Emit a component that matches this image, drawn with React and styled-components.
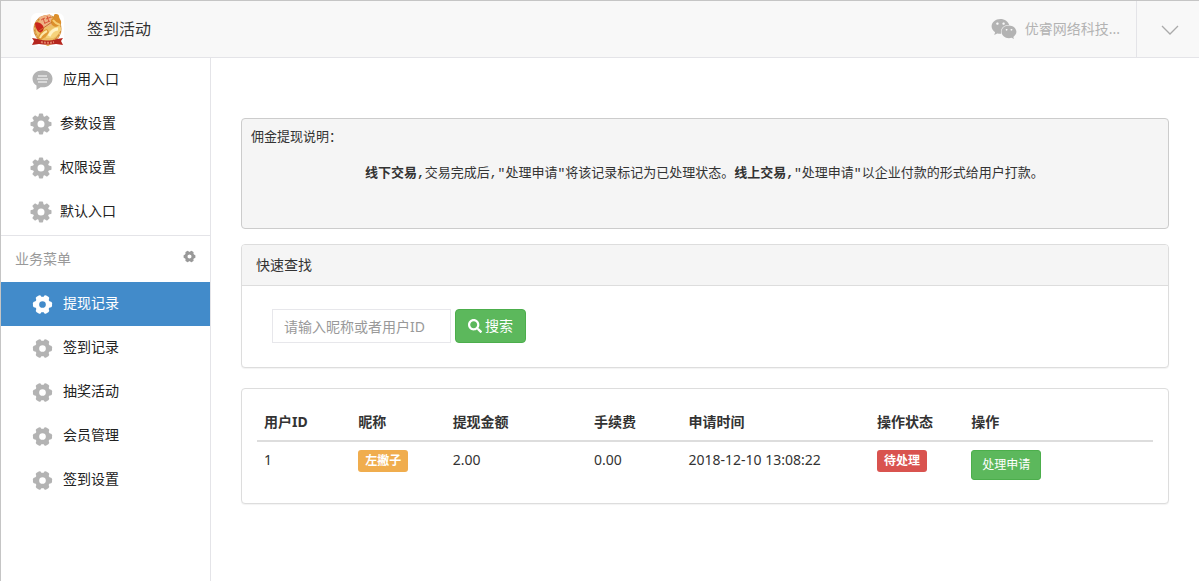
import React from "react";
import styled, { createGlobalStyle } from "styled-components";
import { FaSearch, FaWeixin } from "react-icons/fa";

const GlobalStyle = createGlobalStyle`
  *, *::before, *::after {
    box-sizing: border-box;
  }

  body {
    margin: 0;
    background: #fff;
    color: #333;
    font-family: "Noto Sans", "Noto Sans CJK SC", sans-serif;
    font-size: 14px;
    line-height: 20px;
  }

  button, input {
    font-family: inherit;
  }
`;

const Page = styled.div`
  display: flex;
  flex-direction: column;
  min-height: 100vh;
  border-top: 1px solid #c5c5c5;
  border-left: 1px solid #c5c5c5;
`;

const Header = styled.header`
  display: flex;
  align-items: stretch;
  height: 57px;
  background: #f8f8f8;
  border-bottom: 1px solid #e4e4e8;
`;

const Brand = styled.div`
  display: flex;
  align-items: center;
  gap: 23px;
  padding-left: 30px;
  flex: 1;
`;

const BrandName = styled.h1`
  margin: 0;
  font-size: 16px;
  font-weight: 400;
  line-height: 24px;
`;

const Account = styled.a`
  display: flex;
  align-items: center;
  gap: 8px;
  padding-right: 16px;
  color: #b3b3b3;
  text-decoration: none;
  border-right: 1px solid #e4e4e8;
`;

const ToggleButton = styled.button`
  width: 62px;
  padding: 4px 0 0 4px;
  border: none;
  background: none;
  color: #aaa;
  cursor: pointer;
`;

const Body = styled.div`
  display: flex;
  flex: 1;
`;

const Sidebar = styled.nav`
  flex: 0 0 210px;
  border-right: 1px solid #e4e4e8;
`;

const Menu = styled.ul`
  margin: 0;
  padding: 0;
  list-style: none;
`;

const MenuLink = styled.a`
  display: flex;
  align-items: center;
  gap: ${({ $wide }) => ($wide ? "10px" : "8px")};
  height: 44px;
  padding-left: ${({ $wide }) => ($wide ? "31px" : "29px")};
  color: ${({ $active }) => ($active ? "#fff" : "#222")};
  background: ${({ $active }) => ($active ? "#428bca" : "transparent")};
  text-decoration: none;

  svg {
    color: ${({ $active }) => ($active ? "#fff" : "#b3b3b3")};
  }
`;

const MenuText = styled.span`
  padding-bottom: 2px;
`;

const MenuTitle = styled.div`
  display: flex;
  align-items: center;
  justify-content: space-between;
  height: 47px;
  padding: 0 14px;
  margin-top: 1px;
  border-top: 1px solid #e4e4e8;
  color: #999;
`;

const IconButton = styled.button`
  display: flex;
  padding: 0 0 6px;
  border: none;
  background: none;
  color: #999;
  cursor: pointer;
`;

const Main = styled.main`
  flex: 1;
  min-width: 0;
  padding: 60px 30px 30px;
`;

const Notice = styled.section`
  padding: 10px 9px 9px;
  margin-bottom: 15px;
  background: #f5f5f5;
  border: 1px solid #ccc;
  border-radius: 4px;
  font-family: "Liberation Mono", "Noto Sans CJK SC", monospace;
  font-size: 13px;
  line-height: 18px;

  p {
    margin: 0;
  }

  p + p {
    padding: 18px 0 36px 114px;
  }
`;

const Panel = styled.section`
  margin-bottom: 20px;
  background: #fff;
  border: 1px solid #ddd;
  border-radius: 4px;
  box-shadow: 0 1px 1px rgba(0, 0, 0, 0.05);
`;

const PanelHeading = styled.h2`
  margin: 0;
  padding: 10px 14px;
  background: #f5f5f5;
  border-bottom: 1px solid #ddd;
  border-radius: 3px 3px 0 0;
  font-size: 14px;
  font-weight: 400;
  line-height: 20px;
`;

const PanelBody = styled.div`
  padding: 15px;
`;

const SearchForm = styled.form`
  display: flex;
  align-items: center;
  gap: 4px;
  padding: 23px 30px 24px;
`;

const SearchInput = styled.input`
  width: 179px;
  height: 34px;
  padding: 6px 11px;
  border: 1px solid #e7e7eb;
  color: #555;
  font-size: 14px;

  &::placeholder {
    color: #999;
    opacity: 1;
  }
`;

const Button = styled.button`
  display: inline-flex;
  align-items: center;
  justify-content: center;
  gap: 3px;
  min-width: 70px;
  height: ${({ $small }) => ($small ? "30px" : "34px")};
  padding: ${({ $small }) => ($small ? "0 9px" : "0 12px")};
  border: 1px solid #4cae4c;
  border-radius: ${({ $small }) => ($small ? "3px" : "4px")};
  background: #5cb85c;
  color: #fff;
  font-size: ${({ $small }) => ($small ? "12px" : "14px")};
  line-height: 18px;
  vertical-align: top;
  cursor: pointer;

  &:hover {
    background: #449d44;
  }
`;

const Table = styled.table`
  width: 100%;
  table-layout: fixed;
  border-collapse: collapse;

  th,
  td {
    padding: 8px 7px;
    text-align: left;
    vertical-align: top;
  }

  th {
    border-bottom: 2px solid #ddd;
    font-weight: 700;
  }
`;

const HeadCell = styled.th`
  width: ${({ $width }) => $width};
`;

const Label = styled.span`
  display: inline-block;
  height: 22px;
  padding: 0 7px;
  border-radius: 3px;
  background: ${({ $color }) => $color};
  color: #fff;
  font-size: 12px;
  font-weight: 700;
  line-height: 22px;
  vertical-align: top;
`;

const Logo = () => (
  <svg width="33" height="33" viewBox="0 0 33 33" aria-hidden="true">
    <rect width="33" height="33" rx="6" fill="#fff" />
    <circle cx="16.5" cy="16" r="14" fill="#d18a35" />
    <circle cx="16.5" cy="16" r="12" fill="#edc068" />
    <circle cx="16.5" cy="16" r="13" fill="none" stroke="#f0c982" strokeDasharray="2 2" />
    <path d="M8 4 19 1l3 10-11 5z" fill="#efb285" />
    <path d="M4 10c3-2 7 0 9 5l-2 5C7 20 4 15 4 10z" fill="#c9261c" />
    <path d="m10 7 4-2m-2 0 2 6m2-8 2 6m-3-3 5-2m-6 6 5-2" stroke="#d8583b" fill="none" />
    <path d="M20 7c2-2 3-2 3-5 1-2 5-1 5 1 0 3 3 4 2 8l-4 3c-4 0-7-3-6-7z" fill="#dc8f2c" />
    <path d="M22 7c2 3 4 4 7 5" stroke="#f7cf76" strokeWidth="2" fill="none" />
    <path d="M15 25c1-6 6-11 14-12 3 3-2 10-7 12z" fill="#f6d37b" />
    <path d="M18 23c2-4 5-7 9-7" stroke="#fff2c4" strokeWidth="3" fill="none" />
    <path d="M7 26c0-5 3-8 9-10l2 3c-2 4-5 7-10 8z" fill="#e09a36" />
    <path d="M9 25c1-3 3-5 7-7" stroke="#fce7a8" strokeWidth="2" fill="none" />
    <path d="M8 18 21 9" stroke="#c9742a" fill="none" />
    <path d="m1 25 6 1c6 2 13 2 19 0l6-1-2 3 2 4-7-1c-5 1-12 1-17 0l-7 1 2-4z" fill="#b5261e" />
    <path d="M10 29c4 1 9 1 13 0" stroke="#e07d63" strokeWidth="2" strokeDasharray="2 1" fill="none" />
    <path d="M12 31c3 1 6 1 9 0l-4 2z" fill="#dc9b34" />
  </svg>
);

const Gear = ({ size = 22, teeth = 8 }) => {
  const angles = Array.from({ length: teeth }, (_, i) => (i * 360) / teeth);
  const soft = teeth === 6;
  return (
    <svg width={size} height={size} viewBox="0 0 22 22" fill="currentColor" aria-hidden="true">
      <circle cx="11" cy="11" r="5.8" fill="none" stroke="currentColor" strokeWidth="4.6" />
      {angles.map((a) =>
        soft ? (
          <rect key={a} x="15" y="7.9" width="6" height="6.2" rx="1.8" transform={`rotate(${a} 11 11)`} />
        ) : (
          <path key={a} d="M8.300 4.500 8.900 1.200Q9 .5 9.700.5h2.600q.7 0 .8.700L13.700 4.500z" transform={`rotate(${a} 11 11)`} />
        )
      )}
    </svg>
  );
};

const Bubble = () => (
  <svg width="21" height="21" viewBox="0 0 21 21" aria-hidden="true">
    <path d="M10.500.5C4.700.5.5 4 .5 8.800c0 3 1.500 5.300 4 6.700V20l4-2.800c6.800 1 12-2.900 12-8.400C20.500 4 16.300.5 10.500.5z" fill="currentColor" />
    <path d="M6 6h9M5 9h11M6 12h9" stroke="#fff" strokeWidth="1.200" />
  </svg>
);

const ChevronDown = () => (
  <svg width="18" height="11" viewBox="0 0 18 11" fill="none" stroke="currentColor" aria-hidden="true">
    <path d="m1 1 8 8 8-8" strokeWidth="1.300" />
  </svg>
);

const entryMenu = [
  { name: "应用入口", bubble: true },
  { name: "参数设置" },
  { name: "权限设置" },
  { name: "默认入口" },
];

const businessMenu = ["提现记录", "签到记录", "抽奖活动", "会员管理", "签到设置"];

const columns = [
  { title: "用户ID", width: "10%" },
  { title: "昵称", width: "10%" },
  { title: "提现金额", width: "15%" },
  { title: "手续费", width: "10%" },
  { title: "申请时间", width: "20%" },
  { title: "操作状态", width: "10%" },
  { title: "操作", width: "20%" },
];

const records = [
  { id: 1, nickname: "左撇子", amount: "2.00", fee: "0.00", time: "2018-12-10 13:08:22", status: "待处理" },
];

const App = () => (
  <Page>
    <GlobalStyle />
    <Header>
      <Brand>
        <Logo />
        <BrandName>签到活动</BrandName>
      </Brand>
      <Account href="#">
        <FaWeixin size={26} />
        优睿网络科技...
      </Account>
      <ToggleButton type="button" aria-label="展开">
        <ChevronDown />
      </ToggleButton>
    </Header>
    <Body>
      <Sidebar>
        <Menu>
          {entryMenu.map(({ name, bubble }) => (
            <li key={name}>
              <MenuLink href="#" $wide={bubble}>
                {bubble ? <Bubble /> : <Gear />}
                <MenuText>{name}</MenuText>
              </MenuLink>
            </li>
          ))}
        </Menu>
        <MenuTitle>
          业务菜单
          <IconButton type="button" aria-label="设置">
            <Gear size={13} teeth={6} />
          </IconButton>
        </MenuTitle>
        <Menu>
          {businessMenu.map((name, index) => (
            <li key={name}>
              <MenuLink href="#" $wide $active={index === 0}>
                <Gear size={21} teeth={6} />
                <MenuText>{name}</MenuText>
              </MenuLink>
            </li>
          ))}
        </Menu>
      </Sidebar>
      <Main>
        <Notice>
          <p>佣金提现说明：</p>
          <p>
            <strong>线下交易,</strong>交易完成后,"处理申请"将该记录标记为已处理状态。
            <strong>线上交易,</strong>"处理申请"以企业付款的形式给用户打款。
          </p>
        </Notice>
        <Panel>
          <PanelHeading>快速查找</PanelHeading>
          <SearchForm onSubmit={(e) => e.preventDefault()}>
            <SearchInput type="text" aria-label="昵称或者用户ID" placeholder="请输入昵称或者用户ID" />
            <Button type="submit">
              <FaSearch size={14} />
              搜索
            </Button>
          </SearchForm>
        </Panel>
        <Panel>
          <PanelBody>
            <Table>
              <thead>
                <tr>
                  {columns.map(({ title, width }) => (
                    <HeadCell key={title} $width={width}>
                      {title}
                    </HeadCell>
                  ))}
                </tr>
              </thead>
              <tbody>
                {records.map((row) => (
                  <tr key={row.id}>
                    <td>{row.id}</td>
                    <td>
                      <Label $color="#f0ad4e">{row.nickname}</Label>
                    </td>
                    <td>{row.amount}</td>
                    <td>{row.fee}</td>
                    <td>{row.time}</td>
                    <td>
                      <Label $color="#d9534f">{row.status}</Label>
                    </td>
                    <td>
                      <Button type="button" $small>
                        处理申请
                      </Button>
                    </td>
                  </tr>
                ))}
              </tbody>
            </Table>
          </PanelBody>
        </Panel>
      </Main>
    </Body>
  </Page>
);

export default App;
